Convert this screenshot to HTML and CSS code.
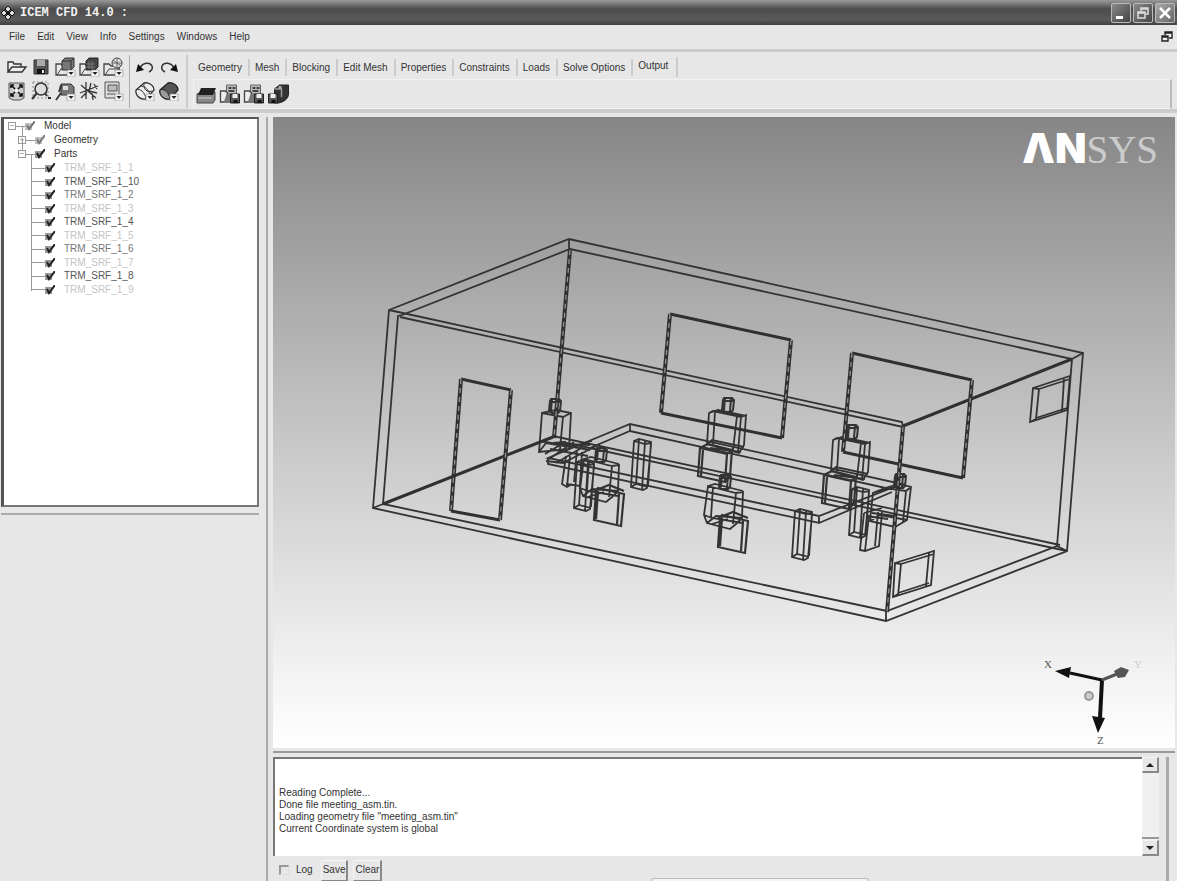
FILE: index.html
```html
<!DOCTYPE html>
<html lang="en">
<head>
<meta charset="utf-8">
<title>ICEM CFD 14.0</title>
<link rel="stylesheet" href="styles.css">
</head>
<body>
<div class="app">
  <header class="titlebar">
    <svg class="app-icon" viewBox="0 0 14 14" aria-hidden="true"><path d="M7 0l3 3-3 3-3-3zM7 8l3 3-3 3-3-3zM3 4l3 3-3 3-3-3zM11 4l3 3-3 3-3-3z" fill="#ddd" stroke="#111"/><circle cx="7" cy="7" r="1.5" fill="#111"/></svg>
    <h1 class="title">ICEM CFD 14.0 :</h1>
    <div class="window-buttons">
      <button class="win-btn" aria-label="Minimize"><svg viewBox="0 0 18 18"><path d="M4 12h7v3H4z" fill="#fff"/></svg></button>
      <button class="win-btn" aria-label="Restore"><svg viewBox="0 0 18 18" fill="none" stroke="#ddd" stroke-width="1.5"><path d="M7 7V4h7v6h-3M7 5h7M4 8h7v6H4zM4 9h7"/></svg></button>
      <button class="win-btn win-close" aria-label="Close"><svg viewBox="0 0 18 18"><path d="M4 4l10 10M14 4L4 14" stroke="#fff" stroke-width="2.5"/></svg></button>
    </div>
  </header>

  <nav class="menubar">
    <button>File</button><button>Edit</button><button>View</button><button>Info</button><button>Settings</button><button>Windows</button><button>Help</button>
    <button class="mdi" aria-label="Restore document"><svg viewBox="0 0 14 14" fill="#eee" stroke="#222" stroke-width="1.4"><path d="M5 5V2h7v6H9M5 3h7"/><path d="M2 6h6v5H2zM2 7h6"/></svg></button>
  </nav>

  <div class="toolbar">
    <svg class="defs" aria-hidden="true">
      <defs>
        <g id="drop"><path d="M12 13h8v7h-8z" fill="#f4f4f4" stroke="#888" stroke-width=".6"/><path d="M13.500 15h5l-2.500 3z" fill="#222"/></g>
        <g id="folder"><path d="M1 18V7h5l2 2h8v9z" fill="#e8e8e8" stroke="#444" stroke-width="1.3"/><path d="M2 18l4-6h11" fill="none" stroke="#444"/></g>
        <g id="disk"><path d="M0 0h9v9H0z" fill="#555" stroke="#222"/><path d="M2 0h5v4H2z" fill="#eee"/><path d="M3 6h4v3H3z" fill="#111"/></g>
        <g id="solver"><path d="M7 1h10v9H7z" fill="#bbb" stroke="#666"/><path d="M9 3h3v2H9zM13 3h3v2h-3zM9 6h6v2H9z" fill="#444"/><path d="M1 7h5l2 2v9H1z" fill="#eee" stroke="#444" stroke-width="1.300"/><path d="M7 10h5v9H4z" fill="#777"/><use href="#disk" x="11" y="10"/></g>
      </defs>
    </svg>
    <div class="tools tools-file">
      <button aria-label="Open project"><svg viewBox="0 0 20 20"><path d="M1 15V5h5l1 2h7v3M1 15l4-5h14l-4 5z" fill="#eee" stroke="#333" stroke-width="1.400"/></svg></button>
      <button aria-label="Save project"><svg viewBox="0 0 20 20"><path d="M3 3h14v14H3z" fill="#555" stroke="#333"/><path d="M6 3h8v6H6z" fill="#aaa"/><path d="M6 12h8v5H6z" fill="#111"/><path d="M11 13h2v3h-2z" fill="#eee"/></svg></button>
      <button aria-label="Open geometry"><svg viewBox="0 0 20 20"><use href="#folder"/><path d="M7 4l3-3h9v9l-3 3H7z" fill="#777" stroke="#333"/><path d="M7 4h9v9M16 4l3-3" fill="none" stroke="#333"/><use href="#drop"/></svg></button>
      <button aria-label="Open mesh"><svg viewBox="0 0 20 20"><use href="#folder"/><path d="M7 4l3-3h9v9l-3 3H7z" fill="#444" stroke="#222"/><path d="M7 7h9M7 10h9M10 4v8M13 4v8" stroke="#888" stroke-width=".7"/><use href="#drop"/></svg></button>
      <button aria-label="Open blocking"><svg viewBox="0 0 20 20"><use href="#folder"/><circle cx="14" cy="6" r="5" fill="#ddd" stroke="#444"/><path d="M9 6h10M14 1v10M10 3l8 6" stroke="#555" stroke-width=".8"/><use href="#drop"/></svg></button>
      <button aria-label="Fit window"><svg viewBox="0 0 20 20"><path d="M2 2h15v15l-4 2H6l-4-2z" fill="#ccc" stroke="#555"/><path d="M4 4l4 4M15 4l-4 4M4 15l4-4M15 15l-4-4M4 7V4h3M12 4h3v3M4 12v3h3M12 15h3v-3" stroke="#111" stroke-width="1.600" fill="none"/><circle cx="9.500" cy="9.500" r="1.500" fill="#fff"/></svg></button>
      <button aria-label="Box zoom"><svg viewBox="0 0 20 20"><path d="M2 1h15v16H2z" fill="none" stroke="#888" stroke-dasharray="2 2"/><circle cx="10" cy="8" r="6" fill="#ddd" stroke="#333" stroke-width="1.600"/><path d="M6 12l-5 6M14 12l2 3" stroke="#333" stroke-width="2"/><path d="M17 16h3v2h-3z" fill="#222"/></svg></button>
      <button aria-label="Measure"><svg viewBox="0 0 20 20"><path d="M6 3h10l3 3v8H6z" fill="#777" stroke="#333"/><path d="M8 5h5v4H8z" fill="#ddd"/><path d="M6 12l-5 7M6 4l-2 7" stroke="#333" stroke-width="1.800"/><use href="#drop"/></svg></button>
      <button aria-label="Local coordinate system"><svg viewBox="0 0 20 20" fill="none" stroke="#333" stroke-width="1.300"><path d="M7 1v17M1 12l18-7M2 4l15 13M12 2l-2 8 8 2M2 17l6-6M13 12l1 7M15 3l3 5"/></svg></button>
      <button aria-label="Refresh"><svg viewBox="0 0 20 20"><path d="M2 1h14v16H2z" fill="#ddd" stroke="#555"/><path d="M5 4h9v6H5zM4 13h8" fill="#bbb" stroke="#555"/><use href="#drop"/></svg></button>
    </div>
    <div class="tools tools-edit">
      <button aria-label="Undo"><svg viewBox="0 0 20 20"><path d="M5 11c3-6 10-6 12-2 1 3-1 5-3 6" fill="none" stroke="#333" stroke-width="1.500"/><path d="M1 15l2-8 6 6z" fill="#111"/></svg></button>
      <button aria-label="Redo"><svg viewBox="0 0 20 20"><path d="M15 11C12 5 5 5 3 9c-1 3 1 5 3 6" fill="none" stroke="#333" stroke-width="1.500"/><path d="M19 15l-2-8-6 6z" fill="#111"/></svg></button>
      <button aria-label="Wireframe"><svg viewBox="0 0 22 20"><path d="M2 9l8-7c4-1 10 2 10 7l-8 9C7 19 1 15 2 9z" fill="#eee" stroke="#333" stroke-width="1.300"/><path d="M2 9c4-2 9 2 10 9M10 2c-1 6 3 10 8 8M6 5c5 0 9 4 10 9" fill="none" stroke="#333"/><use href="#drop"/></svg></button>
      <button aria-label="Solid display"><svg viewBox="0 0 22 20"><path d="M2 9l8-7c4-1 10 2 10 7l-8 9C7 19 1 15 2 9z" fill="#555" stroke="#222" stroke-width="1.300"/><path d="M2 9c4-2 9 2 10 9-5 1-11-3-10-9z" fill="#999" stroke="#222"/><use href="#drop"/></svg></button>
    </div>
    <div class="ribbon">
      <div class="tabs" role="tablist">
        <button role="tab">Geometry</button><button role="tab">Mesh</button><button role="tab">Blocking</button><button role="tab">Edit Mesh</button><button role="tab">Properties</button><button role="tab">Constraints</button><button role="tab">Loads</button><button role="tab">Solve Options</button><button role="tab" class="active" aria-selected="true">Output</button>
      </div>
      <div class="ribbon-body">
        <button aria-label="Select solver"><svg viewBox="0 0 20 20"><path d="M1 10l4-2h14v8l-2 3H1z" fill="#888" stroke="#444"/><path d="M2 11l3-7h15l-3 7z" fill="#222"/><path d="M2 14h14" stroke="#ccc"/></svg></button>
        <button aria-label="Boundary conditions"><svg viewBox="0 0 21 20"><use href="#solver"/></svg></button>
        <button aria-label="Edit parameters"><svg viewBox="0 0 21 20"><use href="#solver"/></svg></button>
        <button aria-label="Write input"><svg viewBox="0 0 21 20"><path d="M7 5l5-4h9v9c0 5-5 8-10 9H7z" fill="#333" stroke="#222"/><path d="M7 5h7v8" fill="none" stroke="#999" stroke-width="1.500"/><path d="M11 2h3v3h-3z" fill="#aaa"/><use href="#disk" x="1" y="10"/></svg></button>
      </div>
    </div>
  </div>

  <main class="workspace">
    <aside class="sidebar">
      <section class="tree-panel" aria-label="Model tree">
        <ul class="tree">
          <li class="lv0"><button class="twist" aria-label="Collapse Model">−</button><label><input type="checkbox" checked class="dim">Model</label></li>
          <li class="lv1"><button class="twist" aria-label="Expand Geometry">+</button><label><input type="checkbox" checked class="dim">Geometry</label></li>
          <li class="lv1"><button class="twist" aria-label="Collapse Parts">−</button><label><input type="checkbox" checked>Parts</label></li>
          <li>
            <ul class="parts">
              <li><label class="p-light"><input type="checkbox" checked>TRM_SRF_1_1</label></li>
              <li><label class="p-dark"><input type="checkbox" checked>TRM_SRF_1_10</label></li>
              <li><label class="p-mid"><input type="checkbox" checked>TRM_SRF_1_2</label></li>
              <li><label class="p-light"><input type="checkbox" checked>TRM_SRF_1_3</label></li>
              <li><label class="p-dark"><input type="checkbox" checked>TRM_SRF_1_4</label></li>
              <li><label class="p-light"><input type="checkbox" checked>TRM_SRF_1_5</label></li>
              <li><label class="p-mid"><input type="checkbox" checked>TRM_SRF_1_6</label></li>
              <li><label class="p-light"><input type="checkbox" checked>TRM_SRF_1_7</label></li>
              <li><label class="p-dark"><input type="checkbox" checked>TRM_SRF_1_8</label></li>
              <li><label class="p-light"><input type="checkbox" checked>TRM_SRF_1_9</label></li>
            </ul>
          </li>
        </ul>
      </section>
      <section class="options-panel" aria-label="Options"></section>
    </aside>

    <div class="content">
      <section class="viewport" aria-label="Geometry view">
        <svg class="scene" viewBox="273 117 902 631" preserveAspectRatio="xMidYMid meet">
          <defs>
            <g id="leg"><path d="M3 2L8 0L20 3V6L16 49L12 51L0 48ZM8 0L5 46M14 2L11 51M20 3L17 47M3 2L14 5L20 4M0 48L5 45L17 48"/></g>
            <g id="head"><path d="M3 0H11L13 2L12 12L10 14H4L1 12L2 2ZM4 0L3 12M10 1L9 13M2 3H12" stroke-width="2"/></g>
            <g id="back-person">
              <use href="#head" x="721" y="398"/>
              <path d="M713 411L741 417L746 415L744 445L739 453L707 444L709 413ZM709 413L718 410L746 416M715 412L713 444M741 417L738 452M737 416L733 450M707 444L712 440L744 447M710 448L741 452"/>
              <path d="M700 448L727 454L725 482L698 476ZM727 454L732 450L730 476L725 482M700 448L708 444L732 450M703 450L701 476" stroke-width="2.200"/>
            </g>
            <g id="front-person">
              <use href="#head" x="718" y="475"/>
              <path d="M708 486L736 493L743 492L742 518L736 524L730 529L707 523L704 515ZM708 486L715 484L743 491M713 487L711 517M736 493L733 524M704 515L712 518L742 523M707 523L716 516L742 518M712 524L728 519"/>
              <path d="M720 518L722 515L748 521L745 553L718 547ZM743 521L741 551M718 518L733 512L748 518M722 518L720 546" stroke-width="2.200"/>
            </g>
            <path id="hatch-lines" d="M570 250L554 438M903 427L887 612M670 314L661 413M791 340L782 438M852 353L843 452M972 380L963 478M461 379L451 511M511 390L500 520"/>
          </defs>
          <g class="wire">
            <path d="M389 310L569 239L1083 353L1067 551L886 621L373 508ZM402 315L570 249L1072 359L1057 546L887 611L383 504L398 316Z"/>
            <path d="M389 310L902 422L903 427L400 317M569 239V249M886 621V611M1072 359L1083 353M1057 546L1067 551M373 508L383 504"/>
            <path d="M553 436L1060 545M562 442L1067 551"/>
            <path d="M548 458L630 424L902 484L819 516ZM819 516V523L548 464V458M590 448L630 431L890 489M630 424V431M819 523L892 492"/>
            <path d="M1033 388L1070 376L1067 410L1030 422ZM1039 389L1070 379M1039 389L1036 419M1064 379L1062 411M1036 418L1067 408M1033 388L1039 389M1030 422L1036 419"/>
            <path d="M895 563L934 551L931 585L893 597ZM901 564L898 596M929 553L926 586M901 564L934 554M898 593L929 583M895 563L901 564M893 597L898 594"/>
            <use href="#leg" x="631" y="439"/><use href="#leg" x="792" y="509"/><use href="#leg" x="849" y="487"/><use href="#leg" x="574" y="460"/>
            <use href="#back-person"/><use href="#back-person" x="124" y="27"/>
            <use href="#front-person"/><use href="#front-person" x="-124" y="-27"/>
            <use href="#head" x="548" y="399"/>
            <path d="M542 413L556 410L571 413L569 449L539 452ZM542 413L563 417L571 413M563 417L560 449M539 452L546 443L571 447M545 454L562 444L590 445M549 459L574 442M556 463L583 447M546 461L563 463L600 444M571 447L592 441M550 449L588 456M553 443L566 442M540 441L590 450"/>
            <path d="M566 456L562 484L567 487L572 484M570 456L567 487M577 450L574 482M582 452L580 486L566 484"/>
            <use href="#head" x="893" y="474"/>
            <path d="M885 488L899 484L911 487L907 520L895 527L870 521L873 493ZM885 488L906 491L911 487M906 491L903 522M873 493L895 487M870 521L880 515L907 520M866 516L888 519M872 513L895 516"/>
            <path d="M864 513L860 550L865 551L879 546L882 512M869 515L865 551M878 512L875 546M864 513L882 508"/>
          </g>
          <g class="heavy"><path d="M383 504L553 437M903 426L1072 359M670 314L791 340M661 413L782 438M852 353L972 380M843 452L963 478M461 379L511 390M451 511L500 520"/></g>
          <use href="#hatch-lines" class="hatch-dark"/>
          <use href="#hatch-lines" class="hatch-light"/>
          <g class="triad">
            <path d="M1102 680L1070 673" stroke="#111" stroke-width="3"/><path d="M1055 671L1071 667L1069 678Z" fill="#111"/>
            <path d="M1102 680L1100 718" stroke="#111" stroke-width="4"/><path d="M1092 716L1105 718L1098 733Z" fill="#111"/>
            <path d="M1102 680L1117 674" stroke="#555" stroke-width="3"/><path d="M1114 671L1121 667L1129 670L1125 677L1118 678Z" fill="#555"/>
            <circle cx="1089" cy="696" r="4" fill="#ccc" stroke="#999" stroke-width="2"/>
            <text x="1044" y="668" fill="#555">X</text><text x="1134" y="668" fill="#ccc">Y</text><text x="1097" y="744" fill="#555">Z</text>
          </g>
        </svg>
        <div class="logo"><span class="logo-bold">ΛN</span><span class="logo-thin">SYS</span></div>
      </section>

      <section class="console">
        <div class="console-main">
          <div class="console-view">
            <div class="log" role="log">Reading Complete...<br>Done file meeting_asm.tin.<br>Loading geometry file "meeting_asm.tin"<br>Current Coordinate system is global</div>
            <div class="scroll">
              <button aria-label="Scroll up"><svg viewBox="0 0 8 8"><path d="M0 6l4-4 4 4z"/></svg></button>
              <div class="thumb"></div>
              <button aria-label="Scroll down"><svg viewBox="0 0 8 8"><path d="M0 2l4 4 4-4z"/></svg></button>
            </div>
          </div>
          <div class="console-bar">
            <label class="log-check"><input type="checkbox">Log</label>
            <button>Save</button><button>Clear</button>
            <div class="dock-edge"></div>
          </div>
        </div>
      </section>
    </div>
  </main>
</div>
</body>
</html>
```
FILE: styles.css
```css
* { box-sizing: border-box; }
body { margin: 0; background: #fff; color: #333; font: 10px/12px "Liberation Sans", Arial, sans-serif; }
button { font: inherit; color: inherit; background: none; border: 0; padding: 0; margin: 0; }
svg { display: block; }
ul { list-style: none; margin: 0; padding: 0; }

.app { display: flex; flex-direction: column; height: calc(100vh - 6px); background: #e7e7e7; overflow: hidden; }

.titlebar { display: flex; align-items: center; height: 25px; flex: none; padding: 0 2px 0 1px; background: linear-gradient(#999 0, #777 4px, #4c4c4c 9px, #5a5a5a 20px, #444 24px); }
.app-icon { width: 14px; height: 14px; }
.title { margin: 0 0 0 5px; color: #f2f2f2; font: bold 12px/16px "Liberation Mono", monospace; }
.window-buttons { display: flex; gap: 2px; margin-left: auto; }
.win-btn { width: 20px; height: 20px; border: 1px solid #bbb; border-radius: 2px; background: linear-gradient(135deg, #8a8a8a, #444); }
.win-close { background: linear-gradient(135deg, #aaa, #666); }
.win-btn svg { width: 18px; height: 18px; }

.menubar { display: flex; align-items: center; gap: 12px; height: 27px; flex: none; padding: 0 3px 0 9px; border-bottom: 3px solid #ccc; }
.mdi { margin-left: auto; }
.mdi svg { width: 14px; height: 14px; }

.toolbar { display: flex; height: 61px; flex: none; padding: 3px 5px 0; border-bottom: 4px solid #ccc; }
.defs { width: 0; height: 0; position: absolute; }
.tools { display: grid; grid-auto-rows: 24px; align-content: start; height: 53px; }
.tools-file { grid-template-columns: repeat(5, 24px); padding-right: 4px; border-right: 1px solid #aaa; }
.tools-edit { grid-template-columns: repeat(2, 24px); padding: 0 5px 0 3px; border-right: 2px solid #ccc; }
.tools button, .ribbon-body button { display: grid; place-items: center; }
.tools svg, .ribbon-body svg { width: 22px; height: 20px; }
.ribbon { flex: 1; display: flex; flex-direction: column; padding-left: 5px; }
.tabs { display: flex; align-items: center; height: 24px; }
.tabs button { height: 17px; padding: 1px 6px 0 5px; border-right: 2px solid #ccc; }
.tabs .active { height: 20px; padding-right: 8px; padding-bottom: 3px; }
.ribbon-body { flex: 1; display: flex; align-items: center; border: 1px solid #f2f2f2; border-right: 2px solid #bbb; }
.ribbon-body button { width: 24px; height: 24px; }

.workspace { display: flex; flex: 1; min-height: 0; padding: 4px 2px 0 1px; }
.sidebar { display: flex; flex-direction: column; width: 267px; flex: none; padding-right: 7px; border-right: 2px solid #aaa; }
.tree-panel { flex: 389 1 0; padding: 0 0 0 4px; background: #fff; border: 2px solid #555; border-left-width: 3px; border-right-color: #777; border-bottom-color: #777; overflow: hidden; }
.options-panel { flex: 369 1 0; margin-top: 6px; border-top: 2px solid #aaa; }
.tree li { display: flex; align-items: center; position: relative; }
.tree label { display: flex; align-items: center; }
.lv0, .lv1, .parts li { height: 14px; }
.parts li { height: 13px; }
.parts li:nth-child(odd) { height: 14px; }
.lv1 { padding-left: 10px; }
.lv1::before { content: ""; position: absolute; left: 14px; top: -7px; width: 1px; height: 10px; background: #999; }
.twist { width: 8px; height: 8px; border: 1px solid #999; color: #777; font-size: 8px; line-height: 6px; margin-right: 9px; }
.twist::after { content: ""; position: absolute; width: 9px; height: 1px; margin: 3px 0 0 2px; background: #999; }
.tree input { appearance: none; width: 10px; height: 10px; margin: 0 9px 0 0; background: no-repeat center/10px url("data:image/svg+xml,%3Csvg xmlns='http://www.w3.org/2000/svg' viewBox='0 0 10 10'%3E%3Cpath d='M0 2h7v7H0z' fill='%23999'/%3E%3Cpath d='M2 4l2 4L10 0' fill='none' stroke='%23222' stroke-width='2'/%3E%3C/svg%3E"); }
.tree .dim { opacity: .6; }
.parts { margin-left: 23px; border-left: 1px solid #999; margin-bottom: 6px; height: 130px; }
.parts::before { content: ""; position: absolute; left: 23px; top: -7px; width: 1px; height: 7px; background: #999; }
.parts li::before { content: ""; width: 13px; height: 1px; background: #999; }
.p-light { color: #c4c4c4; }
.p-mid { color: #777; }
.p-dark { color: #555; }

.content { flex: 1; min-width: 0; display: flex; flex-direction: column; padding-left: 5px; }
.viewport { flex: 1; min-height: 0; position: relative; background: linear-gradient(#868686, #a0a0a0 20%, #c8c8c8 52%, #eee 84%, #fff); }
.scene { position: absolute; inset: 0; width: 100%; height: 100%; }
.wire { fill: none; stroke: #333; stroke-width: 1.800; }
.heavy { fill: none; stroke: #303030; stroke-width: 3; }
.hatch-dark { fill: none; stroke: #303030; stroke-width: 4; }
.hatch-light { fill: none; stroke: #999; stroke-width: 1.200; stroke-dasharray: 5 4; }
.triad { fill: none; font: 11px "Liberation Serif", serif; }
.logo { position: absolute; top: 10px; right: 17px; display: flex; align-items: baseline; line-height: 42px; }
.logo-bold { font: 900 41px/42px Inter, sans-serif; color: #fff; }
.logo-thin { font: 39px/42px "Liberation Serif", serif; color: #ccc; }

.console { flex: none; height: 130px; margin-top: 3px; padding-top: 4px; border-top: 2px solid #999; }
.console-main { height: 100%; margin-right: 6px; border-right: 3px solid #aaa; padding-right: 7px; display: flex; flex-direction: column; }
.console-view { display: flex; height: 99px; }
.log { flex: 1; padding: 28px 4px 0; background: #fff; border: 2px solid #777; border-right: 0; border-bottom: 0; }
.scroll { display: flex; flex-direction: column; width: 17px; background: #f0f0f0; }
.scroll button { display: grid; place-items: center; height: 16px; border: 1px solid #f4f4f4; border-right: 2px solid #888; border-bottom: 2px solid #888; background: #e7e7e7; }
.scroll svg { width: 8px; height: 8px; fill: #222; }
.thumb { flex: 1; border-bottom: 2px solid #999; margin-bottom: 1px; }
.console-bar { display: flex; align-items: center; flex: 1; padding: 3px 0 0 6px; }
.log-check { display: flex; align-items: center; gap: 7px; margin-right: 8px; }
.log-check input { appearance: none; width: 10px; height: 10px; margin: 0; border: 1px solid #ddd; border-top: 2px solid #999; border-left: 2px solid #999; }
.console-bar button { height: 21px; padding: 0 1px; margin-right: 5px; border: 1px solid #f6f6f6; border-right: 2px solid #888; border-bottom: 1px solid #888; }
.dock-edge { width: 218px; height: 3px; margin-left: 264px; align-self: end; border: 1px solid #bbb; border-bottom: 0; border-radius: 3px 3px 0 0; background: #f4f4f4; }
```
